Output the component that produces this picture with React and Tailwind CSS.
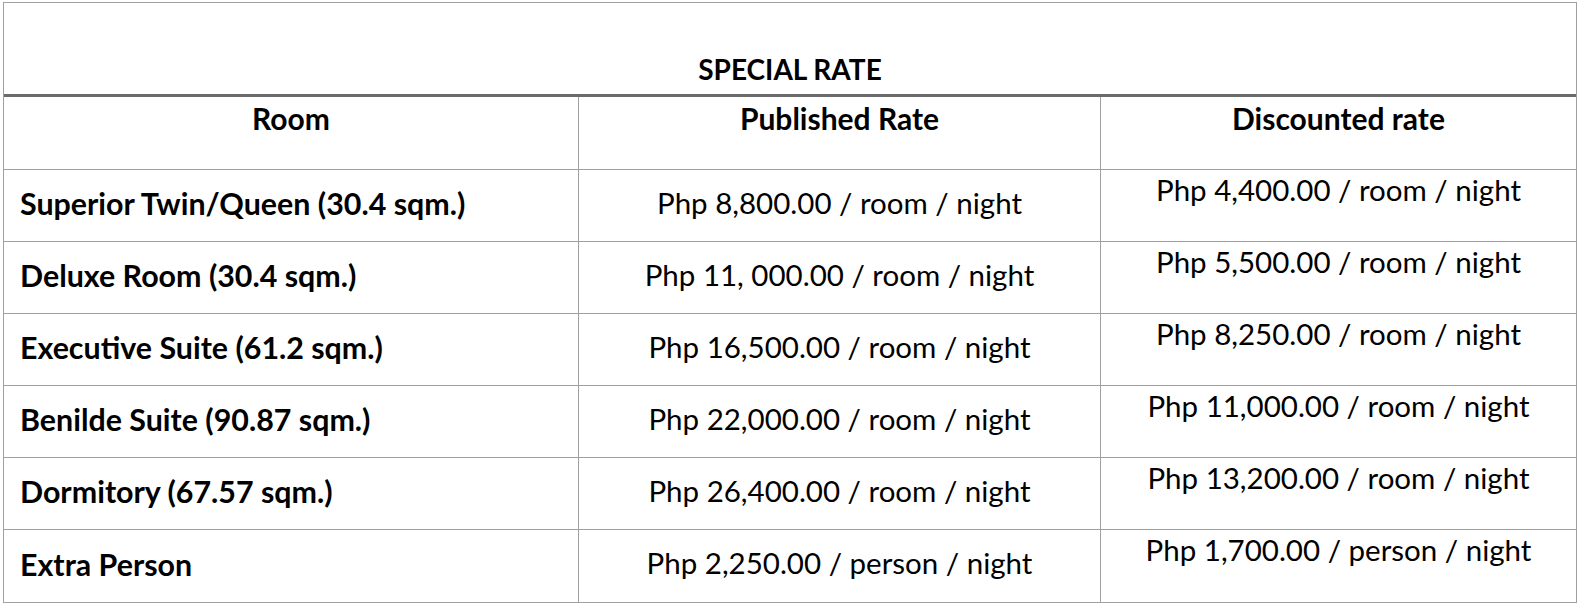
const rows = [
  ['Superior Twin/Queen (30.4 sqm.)', 'Php 8,800.00 / room / night', 'Php 4,400.00 / room / night'],
  ['Deluxe Room (30.4 sqm.)', 'Php 11, 000.00 / room / night', 'Php 5,500.00 / room / night'],
  ['Executive Suite (61.2 sqm.)', 'Php 16,500.00 / room / night', 'Php 8,250.00 / room / night'],
  ['Benilde Suite (90.87 sqm.)', 'Php 22,000.00 / room / night', 'Php 11,000.00 / room / night'],
  ['Dormitory (67.57 sqm.)', 'Php 26,400.00 / room / night', 'Php 13,200.00 / room / night'],
  ['Extra Person', 'Php 2,250.00 / person / night', 'Php 1,700.00 / person / night'],
];

const App = () => {
  return (
    <div className="min-h-screen bg-white pt-[2px] pl-[3px] text-black font-['Lato',sans-serif]">
      <div className="w-[1574px] border border-[#a0a0a0]">
        <div className="h-[94px] border-b-[3px] border-[#6b6b6b] flex items-end justify-center pb-[11px]">
          <span className="text-[28px] font-bold leading-none">SPECIAL RATE</span>
        </div>

        <div className="grid grid-cols-[575px_522px_475px] h-[73px] border-b border-[#a0a0a0] text-[30px] font-bold leading-none">
          <div className="border-r border-[#a0a0a0] flex justify-center pt-[6px]">Room</div>
          <div className="border-r border-[#a0a0a0] flex justify-center pt-[6px]">Published Rate</div>
          <div className="flex justify-center pt-[6px]">Discounted rate</div>
        </div>

        {rows.map((r, i) => (
          <div
            key={r[0]}
            className={`grid grid-cols-[575px_522px_475px] text-[29.5px] leading-none ${
              i === rows.length - 1 ? 'h-[72px]' : 'h-[72px] border-b border-[#a0a0a0]'
            }`}
          >
            <div className="border-r border-[#a0a0a0] flex items-center pl-4 pb-[4px] text-[30.4px] font-bold">{r[0]}</div>
            <div className="border-r border-[#a0a0a0] flex items-center justify-center pb-[6px]">{r[1]}</div>
            <div className="flex justify-center pt-[5px]">{r[2]}</div>
          </div>
        ))}
      </div>
    </div>
  );
};

export default App;
